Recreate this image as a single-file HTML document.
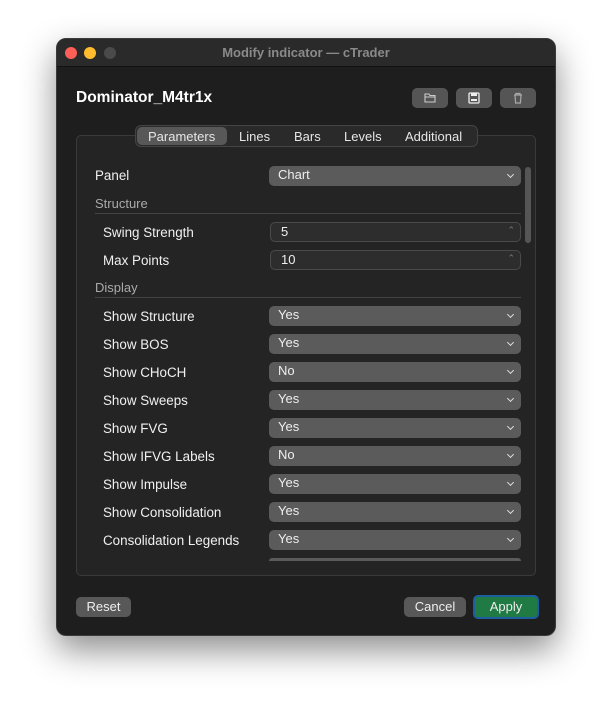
<!DOCTYPE html>
<html><head><style>
*{box-sizing:border-box;margin:0;padding:0}
body{width:612px;height:710px;background:#fff;font-family:"Liberation Sans",sans-serif;position:relative;overflow:hidden}
.win{position:absolute;left:56px;top:38px;width:500px;height:598px;background:#1e1e1e;border-radius:10px;border:1px solid #3a3a3a;box-shadow:0 14px 34px rgba(0,0,0,.45);overflow:hidden}
.tb{position:absolute;left:0;top:0;width:100%;height:28px;background:#2a2a2a;border-bottom:1px solid #111;color:#8a8a8a;font-size:13px;font-weight:bold;text-align:center;line-height:27px}
.dot{position:absolute;top:8px;width:12px;height:12px;border-radius:50%}
.abs{position:absolute}
.h1{left:19px;top:50px;color:#fff;font-size:15.5px;font-weight:bold}
.ib{position:absolute;top:49px;width:36px;height:20px;background:#555;border-radius:5px}
.grp{position:absolute;left:19px;top:96px;width:460px;height:441px;background:#242424;border:1px solid #3a3a3a;border-radius:5px}
.tabs{position:absolute;left:78px;top:86px;width:343px;height:22px;background:#2a2a2a;border:1px solid #444;border-radius:6px;font-size:13px;color:#e6e6e6}
.tabs span{position:absolute;top:3px}
.lbl{position:absolute;color:#f0f0f0;font-size:13.4px}
.sec{position:absolute;left:38px;color:#aaa;font-size:13px}
.line{position:absolute;left:38px;width:426px;height:1px;background:#444}
.dd{position:absolute;left:212px;width:252px;height:20px;background:#5b5b5b;border-radius:5px;color:#eee;font-size:13px;padding-left:9px;line-height:18px}
.dd:after{content:"";position:absolute;right:8px;top:6px;width:4px;height:4px;border-right:1.5px solid #ddd;border-bottom:1.5px solid #ddd;transform:rotate(45deg)}
.dd.p:after{display:none}
.num{position:absolute;left:213px;width:251px;height:20px;background:#2d2d2d;border:1px solid #4a4a4a;border-radius:5px;color:#eee;font-size:13px;padding-left:10px;line-height:18px}
.num:after{content:"⌃";position:absolute;right:5px;top:-2px;font-size:9px;color:#777}
.btn{position:absolute;top:558px;height:20px;background:#585858;border-radius:5px;color:#eee;font-size:13px;text-align:center;line-height:20px}
</style></head><body>
<div class="win">
<div class="tb">Modify indicator — cTrader
<div class="dot" style="left:8px;background:#fe5f57"></div>
<div class="dot" style="left:27px;background:#febc2e"></div>
<div class="dot" style="left:47px;background:#4a4a4a"></div></div>
<div class="abs h1">Dominator_M4tr1x</div>
<div class="ib" style="left:355px"><svg width="36" height="20"><path d="M13 6h4l1 1.5h5v6.5h-10z" fill="none" stroke="#ccc" stroke-width="1.1"/><path d="M13 9h10" stroke="#ccc"/></svg></div>
<div class="ib" style="left:399px"><svg width="36" height="20"><rect x="13" y="5" width="10" height="10" rx="1" fill="none" stroke="#eee" stroke-width="1.3"/><rect x="15" y="5" width="6" height="3" fill="#eee"/><rect x="15" y="11" width="6" height="2" fill="#eee"/></svg></div>
<div class="ib" style="left:443px"><svg width="36" height="20"><path d="M14 7h8M16 7v-1.5h4v1.5M15 7.5l.6 7.5h4.8l.6-7.5" fill="none" stroke="#aaa" stroke-width="1.2"/></svg></div>
<div class="grp"></div>
<div class="tabs"><div class="abs" style="left:1px;top:1px;width:90px;height:18px;background:#585858;border-radius:5px"></div>
<span style="left:12px">Parameters</span><span style="left:103px">Lines</span><span style="left:158px">Bars</span><span style="left:208px">Levels</span><span style="left:269px">Additional</span></div>
<div class="abs" style="left:468px;top:128px;width:6px;height:76px;background:#555;border-radius:3px"></div>
<div class="lbl" style="left:38px;top:129px">Panel</div><div class="dd" style="top:127px">Chart</div>
<div class="sec" style="top:157px">Structure</div><div class="line" style="top:174px"></div>
<div class="lbl" style="left:46px;top:186px">Swing Strength</div><div class="num" style="top:183px">5</div>
<div class="lbl" style="left:46px;top:214px">Max Points</div><div class="num" style="top:211px">10</div>
<div class="sec" style="top:241px">Display</div><div class="line" style="top:258px"></div>
<div class="lbl" style="left:46px;top:270px">Show Structure</div><div class="dd" style="top:267px">Yes</div>
<div class="lbl" style="left:46px;top:298px">Show BOS</div><div class="dd" style="top:295px">Yes</div>
<div class="lbl" style="left:46px;top:326px">Show CHoCH</div><div class="dd" style="top:323px">No</div>
<div class="lbl" style="left:46px;top:354px">Show Sweeps</div><div class="dd" style="top:351px">Yes</div>
<div class="lbl" style="left:46px;top:382px">Show FVG</div><div class="dd" style="top:379px">Yes</div>
<div class="lbl" style="left:46px;top:410px">Show IFVG Labels</div><div class="dd" style="top:407px">No</div>
<div class="lbl" style="left:46px;top:438px">Show Impulse</div><div class="dd" style="top:435px">Yes</div>
<div class="lbl" style="left:46px;top:466px">Show Consolidation</div><div class="dd" style="top:463px">Yes</div>
<div class="lbl" style="left:46px;top:494px">Consolidation Legends</div><div class="dd" style="top:491px">Yes</div>
<div class="dd p" style="top:519px;height:3px;border-radius:5px 5px 0 0"></div>
<div class="btn" style="left:19px;width:55px">Reset</div>
<div class="btn" style="left:347px;width:62px">Cancel</div>
<div class="btn" style="left:416px;top:556px;width:66px;height:24px;background:#1f7a43;border:2px solid #1d5f9e;line-height:20px">Apply</div>
</div>
</body></html>
